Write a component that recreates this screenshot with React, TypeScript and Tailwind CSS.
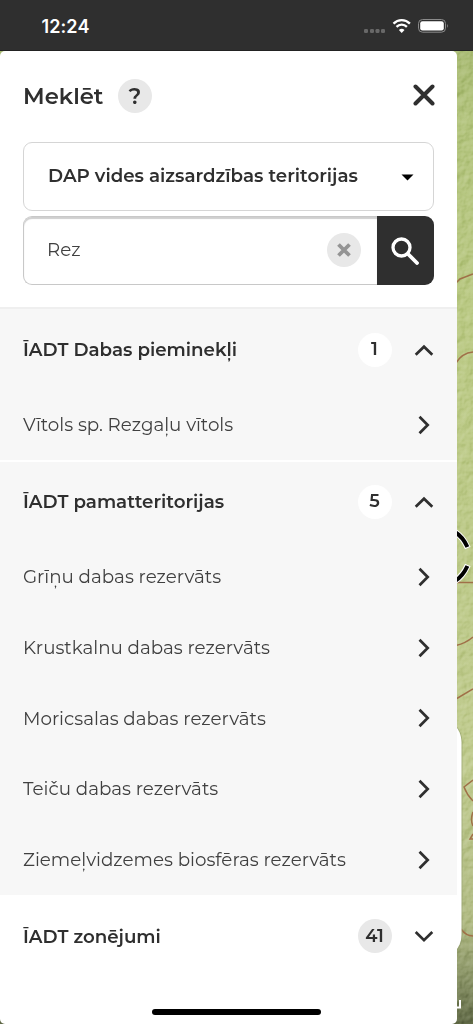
import type { ReactNode } from 'react';
import clsx from 'clsx';

interface ResultGroup {
  title: string;
  count: number;
  open: boolean;
  items: string[];
}

const groups: ResultGroup[] = [
  {
    title: 'ĪADT Dabas pieminekļi',
    count: 1,
    open: true,
    items: ['Vītols sp. Rezgaļu vītols'],
  },
  {
    title: 'ĪADT pamatteritorijas',
    count: 5,
    open: true,
    items: [
      'Grīņu dabas rezervāts',
      'Krustkalnu dabas rezervāts',
      'Moricsalas dabas rezervāts',
      'Teiču dabas rezervāts',
      'Ziemeļvidzemes biosfēras rezervāts',
    ],
  },
  {
    title: 'ĪADT zonējumi',
    count: 41,
    open: false,
    items: [],
  },
];

function MapBackground() {
  return (
    <svg className="absolute inset-0" width="473" height="1024" viewBox="0 0 473 1024" fill="none">
      <defs>
        <linearGradient id="land" x1="0" y1="0" x2="0" y2="1024" gradientUnits="userSpaceOnUse">
          <stop offset="0.04" stopColor="#a8ba73" />
          <stop offset="0.12" stopColor="#b3c47e" />
          <stop offset="0.3" stopColor="#bac984" />
          <stop offset="0.75" stopColor="#c0cb8f" />
          <stop offset="0.9" stopColor="#b1bb84" />
          <stop offset="0.95" stopColor="#8e986a" />
          <stop offset="1" stopColor="#626b48" />
        </linearGradient>
        <filter id="relief" x="0" y="0" width="100%" height="100%" colorInterpolationFilters="sRGB">
          <feTurbulence type="fractalNoise" baseFrequency="0.11" numOctaves="3" seed="4" />
          <feDiffuseLighting surfaceScale="2" lightingColor="#ffffff">
            <feDistantLight azimuth="225" elevation="32" />
          </feDiffuseLighting>
        </filter>
      </defs>
      <rect width="473" height="1024" fill="url(#land)" />
      <rect width="473" height="1024" filter="url(#relief)" opacity="0.4" style={{ mixBlendMode: 'soft-light' }} />
      {/* contour lines */}
      <g stroke="#a07048" strokeWidth="1.5">
        <path d="M456 283 L460 279 L473 274" />
        <path d="M456 363 Q462 353 473 352" />
        <path d="M456 582.500 H473" />
        <path d="M456 645.500 Q466 643 473 637" />
        <path d="M456 699 L473 689" />
        <path d="M473 780 L464 787 Q467 795 473 801" />
        <path d="M473 812 Q470 820 473 826 M473 834 L470 839 H473" />
        <path d="M461 929 Q466 936 473 936" />
      </g>
      {/* location ring */}
      <g fill="none">
        <path d="M455 532 Q463 537 467.800 548" stroke="#fff" strokeWidth="6" />
        <path d="M455 581 Q463 576 467.800 565" stroke="#fff" strokeWidth="6" />
        <path d="M455 532 Q463 537 467.400 547" stroke="#000" strokeWidth="4" />
        <path d="M455 581 Q463 576 467.400 566" stroke="#000" strokeWidth="4" />
      </g>
      <rect x="400" y="718" width="62.500" height="242" rx="24" fill="#8c9867" opacity="0.5" />
      <rect x="400" y="718" width="61.500" height="241" rx="24" fill="#fff" />
      {/* scale bar end */}
      <path d="M456 1007.500 H460 V1000" stroke="#fff" strokeWidth="2" />
    </svg>
  );
}

function StatusBar() {
  return (
    <header className="relative flex h-[51px] items-start justify-between border-b border-[#222] bg-[#2f2f2f] pl-[41.5px] pr-[24px]">
      <span className="mt-[13px] font-['Inter','Liberation_Sans',sans-serif] text-[18px] font-semibold leading-[27px] tracking-[0.1px] text-white">
        12:24
      </span>
      <svg className="mt-[17px]" width="86" height="18" viewBox="0 0 86 18" fill="none">
        <g fill="#686868">
          <rect x="1" y="12" width="4" height="4" rx="1.300" />
          <rect x="7" y="12" width="4" height="4" rx="1.300" />
          <rect x="12.500" y="12" width="4" height="4" rx="1.300" />
          <rect x="18" y="12" width="4" height="4" rx="1.300" />
        </g>
        <g stroke="#fff" strokeWidth="2.300">
          <path d="M30.500 6.600 a11.500 11.500 0 0 1 16.400 0" />
          <path d="M33.500 9.900 a7.300 7.300 0 0 1 10.400 0" />
        </g>
        <path d="M38.700 15.900 L35.900 13 a4 4 0 0 1 5.600 0 Z" fill="#fff" />
        <rect x="55.500" y="2.500" width="27" height="12.700" rx="4" stroke="#8b8b8b" />
        <rect x="57.200" y="4.200" width="23.600" height="9.300" rx="2.300" fill="#fff" />
        <path d="M84 6.800 q1.700 2 0 4.200 Z" fill="#8b8b8b" />
      </svg>
    </header>
  );
}

function Chevron({ dir }: { dir: 'up' | 'down' | 'right' }) {
  return (
    <svg className="h-5 w-5 shrink-0" viewBox="0 0 20 20" fill="none" stroke="#2f2f2f" strokeWidth="2.700">
      {dir === 'up' && <path d="M1.700 14.800 L10 6.700 L18.300 14.800" />}
      {dir === 'down' && <path d="M1.700 6 L10 14.100 L18.300 6" />}
      {dir === 'right' && <path d="M5.500 1.700 L13.700 10 L5.500 18.300" />}
    </svg>
  );
}

function Badge({ children, className }: { children: ReactNode; className?: string }) {
  return (
    <span className={clsx('flex h-[34px] w-[34px] shrink-0 items-center justify-center rounded-full', className)}>
      {children}
    </span>
  );
}

function Group({ group }: { group: ResultGroup }) {
  return (
    <section
      className={clsx(
        'border-b-2 first:pt-[1px]',
        group.open ? 'border-white bg-[#f7f7f7]' : 'border-transparent',
      )}
    >
      <button
        className={clsx('flex w-full items-center pl-[23px] pr-[23px] text-left', group.open ? 'h-[79.3px]' : 'h-[78px]')}
      >
        <span className="flex-1 whitespace-nowrap text-[18.25px] font-semibold">{group.title}</span>
        <Badge className={clsx('mr-[22.5px] text-[18px] font-semibold', group.open ? 'bg-white' : 'bg-[#e8e8e8]')}>
          {group.count}
        </Badge>
        <Chevron dir={group.open ? 'up' : 'down'} />
      </button>
      {group.items.map((item) => (
        <a key={item} className="flex h-[70.8px] items-center justify-between pl-[23px] pr-[23px]">
          <span className="whitespace-nowrap text-[18.28px] text-[#404040]">{item}</span>
          <Chevron dir="right" />
        </a>
      ))}
    </section>
  );
}

export default function App() {
  return (
    <div className="relative h-[1024px] w-[473px] overflow-hidden bg-[#b8c884] font-['Montserrat','Inter','Liberation_Sans',sans-serif] text-[#2f2f2f]">
      <MapBackground />
      <StatusBar />
      <main className="relative h-[973px] w-[457px] overflow-hidden rounded-[5px] bg-white">
        <div className="flex h-[91px] items-center pl-[23px] pr-[22.5px]">
          <h1 className="w-[95px] whitespace-nowrap text-[22.7px] font-semibold">Meklēt</h1>
          <Badge className="mb-[1px] bg-[#e8e8e8] text-[22px] font-semibold">?</Badge>
          <svg
            className="mb-[3px] ml-auto h-[22px] w-[22px]"
            viewBox="0 0 22 22"
            stroke="#2f2f2f"
            strokeWidth="4"
            strokeLinecap="round"
          >
            <path d="M2.500 2.500 L19.500 19.500 M19.500 2.500 L2.500 19.500" />
          </svg>
        </div>

        <div className="mx-[23px] flex h-[69px] w-[411px] items-center justify-between rounded-[9px] border border-[#d5d5d5] pl-[24px] pr-[19px]">
          <span className="mb-[2px] whitespace-nowrap text-[18.25px] font-semibold">
            DAP vides aizsardzības teritorijas
          </span>
          <svg width="13" height="8" viewBox="0 0 13 8" fill="#000">
            <path d="M0.500 1.500 H12.500 L6.500 7.500 Z" />
          </svg>
        </div>

        <div className="mx-[23px] mt-[5px] flex h-[69px] w-[411px] items-stretch">
          <div className="flex flex-1 items-center justify-between rounded-l-[9px] border border-r-0 border-[#c8c8c8] pb-[2px] pl-[23px] pr-[16px] shadow-[inset_0_2px_1px_#cfcfcf]">
            <span className="text-[18.25px] text-[#404040]">Rez</span>
            <Badge className="bg-[#e8e8e8]">
              <svg width="14" height="14" viewBox="0 0 14 14" stroke="#949494" strokeWidth="3.800">
                <path d="M1.500 1.500 L12.500 12.500 M12.500 1.500 L1.500 12.500" />
              </svg>
            </Badge>
          </div>
          <button className="flex w-[57px] items-center justify-center rounded-r-[9px] bg-[#2f2f2f] pr-[1px]">
            <svg width="28" height="28" viewBox="0 0 28 28" fill="none" stroke="#fff" strokeLinecap="round">
              <circle cx="10.500" cy="10.500" r="8.500" strokeWidth="3.300" />
              <path d="M17 17 L26 26" strokeWidth="3.800" />
            </svg>
          </button>
        </div>

        <div className="mt-[22px] border-t-2 border-[#efefef]">
          {groups.map((group) => (
            <Group key={group.title} group={group} />
          ))}
        </div>

        <div className="absolute bottom-[9px] left-[152px] h-[6px] w-[169px] rounded-full bg-black" />
      </main>
    </div>
  );
}
